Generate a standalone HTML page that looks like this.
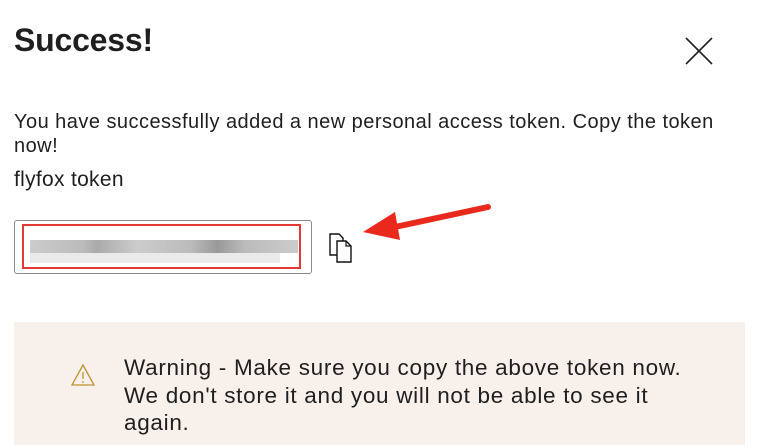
<!DOCTYPE html>
<html><head><meta charset="utf-8"><style>
body{margin:0;width:760px;height:445px;background:#fff;position:relative;overflow:hidden;font-family:"Liberation Sans",Arial,sans-serif;color:#1f1f1f}
.a{position:absolute;white-space:nowrap}
</style></head><body>
<div class="a" style="left:14px;top:22px;font-size:32px;font-weight:bold;letter-spacing:-0.2px">Success!</div>
<svg class="a" style="left:684px;top:36px" width="30" height="30"><path d="M2 2L28 28M28 2L2 28" stroke="#222" stroke-width="1.6" fill="none"/></svg>
<div class="a" style="left:14px;top:110px;font-size:20px;line-height:24px;letter-spacing:0.47px">You have successfully added a new personal access token. Copy the token<br>now!</div>
<div class="a" style="left:14px;top:168px;font-size:21px;letter-spacing:0.3px">flyfox token</div>
<div class="a" style="left:14px;top:220px;width:298px;height:54px;border:1.5px solid #8a8a8a;border-radius:3px;box-sizing:border-box"></div>
<div class="a" style="left:22px;top:224px;width:279px;height:45px;border:2.5px solid #e53935;box-sizing:border-box"></div>
<div class="a" style="left:30px;top:240px;width:268px;height:13px;background:linear-gradient(90deg,#ccc 0,#bbb 20%,#aaa 25%,#ccc 40%,#bbb 60%,#999 70%,#bbb 80%,#ccc 100%)"></div>
<div class="a" style="left:30px;top:253px;width:250px;height:10px;background:#eaeaea"></div>
<svg class="a" style="left:328px;top:232px" width="28" height="32"><path d="M2 2h9l4 4v17H2z" fill="#fff" stroke="#111" stroke-width="1.4"/><path d="M9 9h9l5 5v16H9z" fill="#fff" stroke="#111" stroke-width="1.4"/><path d="M18 9v5h5" fill="none" stroke="#111" stroke-width="1.2"/></svg>
<svg class="a" style="left:355px;top:200px" width="140" height="45"><path d="M133 7L40 27" stroke="#e8291c" stroke-width="6" stroke-linecap="round"/><path d="M8 32L40 12L45 40Z" fill="#e8291c"/></svg>
<div class="a" style="left:14px;top:322px;width:731px;height:123px;background:#f8f0ea"></div>
<svg class="a" style="left:70px;top:363px" width="26" height="24"><path d="M13 2L24 22H2Z" fill="none" stroke="#b8952e" stroke-width="1.3"/><path d="M13 9v7" stroke="#b8952e" stroke-width="1.3"/><circle cx="13" cy="19" r="0.9" fill="#b8952e"/></svg>
<div class="a" style="left:124px;top:354px;font-size:22.5px;line-height:27.5px;letter-spacing:0.7px">Warning - Make sure you copy the above token now.<br>We don't store it and you will not be able to see it<br>again.</div>
</body></html>
